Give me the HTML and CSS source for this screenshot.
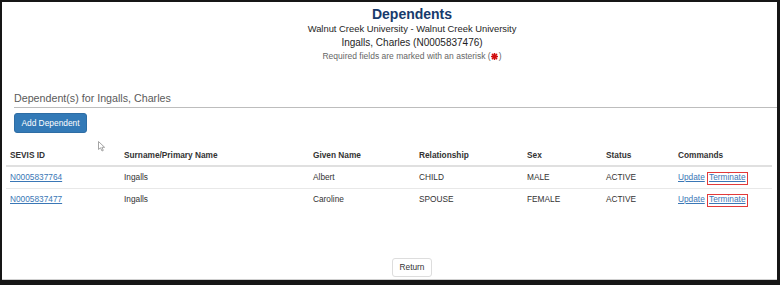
FILE: index.html
```html
<!DOCTYPE html>
<html lang="en">
<head>
<meta charset="utf-8">
<title>Dependents</title>
<link rel="stylesheet" href="styles.css">
</head>
<body>
<div class="frame">
  <div class="page">
    <header class="page-head">
      <h1 class="title">Dependents</h1>
      <div class="sub sub-school">Walnut Creek University - Walnut Creek University</div>
      <div class="sub sub-person">Ingalls, Charles (N0005837476)</div>
      <div class="required">Required fields are marked with an asterisk (<svg class="star" width="7" height="7" viewBox="0 0 10 10"><g stroke="#d10f0f" stroke-width="2.2" stroke-linecap="round"><line x1="5" y1="0.8" x2="5" y2="9.2"/><line x1="0.8" y1="5" x2="9.2" y2="5"/><line x1="2" y1="2" x2="8" y2="8"/><line x1="8" y1="2" x2="2" y2="8"/></g><circle cx="5" cy="5" r="2.8" fill="#d10f0f"/></svg>)</div>
    </header>

    <h2 class="section-title">Dependent(s) for Ingalls, Charles</h2>
    <div class="actions">
      <button class="btn-primary" type="button">Add Dependent</button>
    </div>

    <svg class="cursor" width="8" height="11" viewBox="0 0 8 11"><path d="M0.5 0.5 L0.5 8.5 L2.5 6.8 L4 10 L5.3 9.4 L3.9 6.3 L6.6 6.3 Z" fill="#fff" stroke="#9a9a9a" stroke-width="0.9" stroke-linejoin="round"/></svg>

    <table class="grid">
      <colgroup>
        <col class="c1"><col class="c2"><col class="c3"><col class="c4"><col class="c5"><col class="c6"><col class="c7">
      </colgroup>
      <thead>
        <tr>
          <th>SEVIS ID</th>
          <th>Surname/Primary Name</th>
          <th>Given Name</th>
          <th>Relationship</th>
          <th>Sex</th>
          <th>Status</th>
          <th>Commands</th>
        </tr>
      </thead>
      <tbody>
        <tr>
          <td><a href="#">N0005837764</a></td>
          <td>Ingalls</td>
          <td>Albert</td>
          <td>CHILD</td>
          <td>MALE</td>
          <td>ACTIVE</td>
          <td><a href="#">Update</a> <a href="#" class="boxed">Terminate</a></td>
        </tr>
        <tr>
          <td><a href="#">N0005837477</a></td>
          <td>Ingalls</td>
          <td>Caroline</td>
          <td>SPOUSE</td>
          <td>FEMALE</td>
          <td>ACTIVE</td>
          <td><a href="#">Update</a> <a href="#" class="boxed">Terminate</a></td>
        </tr>
      </tbody>
    </table>

    <div class="footer">
      <button class="btn-default" type="button">Return</button>
    </div>
  </div>
</div>
</body>
</html>
```

FILE: styles.css
```css
html, body {
  margin: 0;
  padding: 0;
  background: #ffffff;
}

body {
  font-family: "Liberation Sans", Arial, sans-serif;
  color: #333333;
}

.frame {
  width: 780px;
  height: 285px;
  box-sizing: border-box;
  border-style: solid;
  border-color: #161616;
  border-width: 2px 3px 5px 2px;
  overflow: hidden;
}

.page {
  position: relative;
  height: 100%;
  box-sizing: border-box;
  border-bottom: 1px solid #cfcfcf;
  display: flex;
  flex-direction: column;
}

.page-head {
  padding-top: 4px;
  padding-left: 45px;
  text-align: center;
}

.title {
  margin: 0;
  font-size: 14px;
  line-height: 16px;
  font-weight: bold;
  color: #173a6c;
}

.sub {
  color: #1e1e1e;
  line-height: 14px;
}

.sub-school {
  font-size: 9.4px;
}

.sub-person {
  font-size: 10px;
}

.required {
  font-size: 8.5px;
  line-height: 12px;
  color: #666666;
}

.star {
  vertical-align: -1px;
  margin: 0 0.5px;
}

.section-title {
  margin: 30px 0 0 12px;
  padding-bottom: 2px;
  font-size: 10.7px;
  line-height: 13px;
  font-weight: normal;
  color: #5a5a5a;
  border-bottom: 1px solid #bdbdbd;
}

.actions {
  margin: 5px 0 0 12px;
}

.btn-primary {
  display: block;
  width: 73px;
  height: 20px;
  padding: 0;
  border: 1px solid #2e6da4;
  border-radius: 3px;
  background: #337ab7;
  color: #ffffff;
  font-family: "Liberation Sans", Arial, sans-serif;
  font-size: 8.4px;
  line-height: 18px;
  text-align: center;
}

.cursor {
  position: absolute;
  left: 96px;
  top: 139px;
}

.grid {
  margin: 12px 0 0 4px;
  width: 766px;
  table-layout: fixed;
  border-collapse: collapse;
  font-size: 8.3px;
  line-height: 11px;
  color: #333333;
}

.c1 { width: 114px; }
.c2 { width: 189px; }
.c3 { width: 106px; }
.c4 { width: 108px; }
.c5 { width: 79px; }
.c6 { width: 72px; }
.c7 { width: 98px; }

.grid th {
  text-align: left;
  font-weight: bold;
  padding: 5px 4px 4px;
  border-bottom: 2px solid #e0e0e0;
  white-space: nowrap;
}

.grid td {
  padding: 5px 4px;
  white-space: nowrap;
}

.grid tbody tr + tr td {
  border-top: 1px solid #e8e8e8;
}

.grid a {
  color: #3a77b6;
  text-decoration: underline;
}

.grid a.boxed {
  display: inline-block;
  border: 1.5px solid #e23a3a;
  padding: 0 1px 3px;
  line-height: 8px;
  margin: -3px 0;
}

.footer {
  margin-top: 48px;
  padding-left: 390px;
}

.btn-default {
  display: block;
  width: 40px;
  height: 19px;
  padding: 0;
  border: 1px solid #dddddd;
  border-radius: 3px;
  background: #ffffff;
  color: #333333;
  font-family: "Liberation Sans", Arial, sans-serif;
  font-size: 8.3px;
  line-height: 17px;
  text-align: center;
}
```
